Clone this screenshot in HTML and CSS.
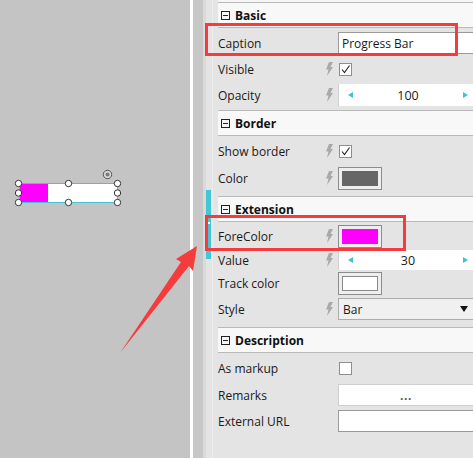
FILE: index.html
```html
<!DOCTYPE html>
<html>
<head>
<meta charset="utf-8">
<link rel="stylesheet" href="styles.css">
</head>
<body>
<div class="app">
  <div class="canvas">
    <svg class="selection" width="140" height="50" viewBox="0 160 140 50">
      <rect x="19.5" y="183.5" width="98" height="19" fill="#ffffff" stroke="#46c3d4" stroke-width="1"/>
      <rect x="20" y="184" width="28" height="18" fill="#ff00ff"/>
      <g fill="#ffffff" stroke="#333" stroke-width="1">
        <circle cx="18.5" cy="183.5" r="3.2"/>
        <circle cx="68.5" cy="183.5" r="3.2"/>
        <circle cx="117.5" cy="183.5" r="3.2"/>
        <circle cx="18.5" cy="193" r="3.2"/>
        <circle cx="117.5" cy="193" r="3.2"/>
        <circle cx="18.5" cy="202.5" r="3.2"/>
        <circle cx="68.5" cy="202.5" r="3.2"/>
        <circle cx="117.5" cy="202.5" r="3.2"/>
      </g>
      <circle cx="107.5" cy="174.5" r="4.2" fill="#d8d8d8" stroke="#555" stroke-width="1"/>
      <circle cx="107.5" cy="174.5" r="2" fill="#7a7a7a"/>
    </svg>
  </div>
  <div class="sep-white"></div>
  <div class="splitter"></div>
  <div class="sep-light"></div>
  <div class="panel">
    <div class="gutter"><div class="scroll-mark"><span class="tick"></span></div></div>
    <div class="grid">
      <div class="top-strip"></div>

      <div class="header"><span class="collapse"></span><span class="htext">Basic</span></div>
      <div class="row h30">
        <span class="label">Caption</span><span class="bolt-cell"></span>
        <span class="value"><span class="textbox">Progress Bar</span></span>
      </div>
      <div class="row h22">
        <span class="label">Visible</span>
        <span class="bolt-cell"><svg class="bolt" width="8" height="14" viewBox="0 0 8 14"><path d="M4 0 L8 0 L5.5 5 L8 5 L2 14 L3.5 7.5 L1 7.5 Z" fill="#a9a9a9"/></svg></span>
        <span class="value"><span class="check checked"><svg width="11" height="11" viewBox="0 0 11 11"><path d="M2 5.5 L4.5 8.5 L9.5 1.5" fill="none" stroke="#222" stroke-width="1.1"/></svg></span></span>
      </div>
      <div class="row h30">
        <span class="label">Opacity</span>
        <span class="bolt-cell"><svg class="bolt" width="8" height="14" viewBox="0 0 8 14"><path d="M4 0 L8 0 L5.5 5 L8 5 L2 14 L3.5 7.5 L1 7.5 Z" fill="#a9a9a9"/></svg></span>
        <span class="value"><span class="spin"><span class="arr-l"></span><span class="num">100</span><span class="arr-r"></span></span></span>
      </div>

      <div class="header"><span class="collapse"></span><span class="htext">Border</span></div>
      <div class="row h30">
        <span class="label">Show border</span>
        <span class="bolt-cell"><svg class="bolt" width="8" height="14" viewBox="0 0 8 14"><path d="M4 0 L8 0 L5.5 5 L8 5 L2 14 L3.5 7.5 L1 7.5 Z" fill="#a9a9a9"/></svg></span>
        <span class="value"><span class="check checked"><svg width="11" height="11" viewBox="0 0 11 11"><path d="M2 5.5 L4.5 8.5 L9.5 1.5" fill="none" stroke="#222" stroke-width="1.1"/></svg></span></span>
      </div>
      <div class="row h24 gap6">
        <span class="label">Color</span>
        <span class="bolt-cell"><svg class="bolt" width="8" height="14" viewBox="0 0 8 14"><path d="M4 0 L8 0 L5.5 5 L8 5 L2 14 L3.5 7.5 L1 7.5 Z" fill="#a9a9a9"/></svg></span>
        <span class="value"><span class="swatch"><span class="swatch-in c-gray"></span></span></span>
      </div>

      <div class="header"><span class="collapse"></span><span class="htext">Extension</span></div>
      <div class="row h28">
        <span class="label">ForeColor</span>
        <span class="bolt-cell"><svg class="bolt" width="8" height="14" viewBox="0 0 8 14"><path d="M4 0 L8 0 L5.5 5 L8 5 L2 14 L3.5 7.5 L1 7.5 Z" fill="#a9a9a9"/></svg></span>
        <span class="value"><span class="swatch"><span class="swatch-in c-magenta"></span></span></span>
      </div>
      <div class="row h20">
        <span class="label">Value</span>
        <span class="bolt-cell"><svg class="bolt" width="8" height="14" viewBox="0 0 8 14"><path d="M4 0 L8 0 L5.5 5 L8 5 L2 14 L3.5 7.5 L1 7.5 Z" fill="#a9a9a9"/></svg></span>
        <span class="value"><span class="spin spin-sm"><span class="arr-l"></span><span class="num">30</span><span class="arr-r"></span></span></span>
      </div>
      <div class="row h26">
        <span class="label">Track color</span><span class="bolt-cell"></span>
        <span class="value"><span class="swatch"><span class="swatch-in c-white"></span></span></span>
      </div>
      <div class="row h26 gap5">
        <span class="label">Style</span>
        <span class="bolt-cell"><svg class="bolt" width="8" height="14" viewBox="0 0 8 14"><path d="M4 0 L8 0 L5.5 5 L8 5 L2 14 L3.5 7.5 L1 7.5 Z" fill="#a9a9a9"/></svg></span>
        <span class="value"><span class="dropdown"><span>Bar</span><span class="caret"></span></span></span>
      </div>

      <div class="header"><span class="collapse"></span><span class="htext">Description</span></div>
      <div class="row h30">
        <span class="label">As markup</span><span class="bolt-cell"></span>
        <span class="value"><span class="check"></span></span>
      </div>
      <div class="row h24">
        <span class="label">Remarks</span><span class="bolt-cell"></span>
        <span class="value"><span class="button">...</span></span>
      </div>
      <div class="row h28">
        <span class="label">External URL</span><span class="bolt-cell"></span>
        <span class="value"><span class="textbox"></span></span>
      </div>
    </div>
  </div>

  <div class="hl hl-caption"></div>
  <div class="hl hl-fore"></div>
  <svg class="arrow" width="473" height="458" viewBox="0 0 473 458">
    <polygon points="197,246 176,259 181,262 120,353 189,266 193,271" fill="#f43c3c"/>
  </svg>
</div>
</body>
</html>
```
FILE: styles.css
```css
html, body {
  margin: 0;
  padding: 0;
}
body {
  width: 473px;
  height: 458px;
  overflow: hidden;
  font-family: "Open Sans", "Noto Sans", sans-serif;
  font-size: 12px;
  color: #1a1a1a;
}
.app {
  position: relative;
  display: flex;
  width: 473px;
  height: 458px;
  overflow: hidden;
}
.canvas {
  position: relative;
  width: 190px;
  flex: none;
  background: #c4c4c4;
}
.selection {
  position: absolute;
  left: 0;
  top: 160px;
}
.sep-white {
  width: 3px;
  flex: none;
  background: #ffffff;
}
.splitter {
  width: 10px;
  flex: none;
  background: #c7c7c7;
}
.sep-light {
  width: 3px;
  flex: none;
  background: #dadada;
}
.panel {
  flex: 1;
  display: flex;
  background: #e4e4e4;
  min-width: 0;
}
.gutter {
  width: 6px;
  flex: none;
  border-right: 1px solid #ececec;
  display: flex;
  flex-direction: column;
}
.scroll-mark {
  margin-top: 190px;
  width: 5px;
  height: 69px;
  background: #45c6d6;
  position: relative;
}
.tick {
  position: absolute;
  left: 2px;
  top: 32px;
  width: 2px;
  height: 2px;
  background: #ffffff;
}
.grid {
  flex: 1;
  display: flex;
  flex-direction: column;
  min-width: 0;
}
.top-strip {
  height: 2px;
  margin-left: 5px;
  background: #f6f6f6;
}
.header {
  margin-left: 5px;
  height: 24px;
  background: #f8f8f8;
  border-top: 1px solid #b9b9b9;
  border-bottom: 1px solid #b9b9b9;
  display: flex;
  align-items: center;
  padding-left: 3px;
}
.collapse {
  position: relative;
  width: 7px;
  height: 7px;
  border: 1px solid #222;
  flex: none;
}
.collapse::after {
  content: "";
  position: absolute;
  left: 1px;
  top: 3px;
  width: 5px;
  height: 1px;
  background: #222;
}
.htext {
  margin-left: 5px;
  font-weight: 700;
  font-size: 12px;
  color: #111;
}
.row {
  display: flex;
  align-items: center;
  padding-left: 5px;
}
.h20 { height: 20px; }
.h22 { height: 22px; }
.h24 { height: 24px; }
.h26 { height: 26px; }
.h28 { height: 28px; }
.h30 { height: 30px; }
.gap5 { margin-bottom: 5px; }
.gap6 { margin-bottom: 6px; }
.label {
  width: 107px;
  flex: none;
  white-space: nowrap;
}
.bolt-cell {
  width: 13px;
  flex: none;
  display: flex;
  align-items: center;
}
.bolt {
  display: block;
}
.value {
  flex: 1;
  display: flex;
  align-items: center;
  min-width: 0;
}
.textbox {
  box-sizing: border-box;
  width: 142px;
  height: 22px;
  background: #ffffff;
  border: 1px solid #9a9a9a;
  padding-left: 3px;
  display: flex;
  align-items: center;
  flex: none;
  font-size: 12px;
}
.check {
  box-sizing: border-box;
  width: 13px;
  height: 13px;
  margin-left: 1px;
  background: #ffffff;
  border: 1px solid #8e8e8e;
  display: flex;
  align-items: center;
  justify-content: center;
}
.check svg {
  display: block;
}
.spin {
  box-sizing: border-box;
  width: 142px;
  height: 22px;
  flex: none;
  background: #ffffff;
  border-left: 1px solid #d0d0d0;
  display: flex;
  align-items: center;
  padding-left: 9px;
  padding-right: 12px;
}
.spin-sm {
  height: 20px;
}
.num {
  flex: 1;
  text-align: center;
  font-size: 12.5px;
}
.arr-l {
  width: 0;
  height: 0;
  border-top: 3.5px solid transparent;
  border-bottom: 3.5px solid transparent;
  border-right: 5px solid #42c0da;
}
.arr-r {
  width: 0;
  height: 0;
  border-top: 3.5px solid transparent;
  border-bottom: 3.5px solid transparent;
  border-left: 5px solid #42c0da;
}
.swatch {
  box-sizing: border-box;
  width: 44px;
  height: 23px;
  border: 1px solid #8c8c8c;
  background: #eeeeee;
  padding: 3px;
  display: flex;
  flex: none;
}
.swatch-in {
  flex: 1;
}
.c-gray { background: #666666; }
.c-magenta { background: #ff00ff; }
.c-white {
  background: #ffffff;
  border: 1px solid #888888;
}
.dropdown {
  box-sizing: border-box;
  width: 136px;
  height: 22px;
  flex: none;
  background: #f0f0f0;
  border: 1px solid #acacac;
  display: flex;
  align-items: center;
  justify-content: space-between;
  padding-left: 4px;
  padding-right: 5px;
}
.caret {
  width: 0;
  height: 0;
  border-left: 4px solid transparent;
  border-right: 4px solid transparent;
  border-top: 6px solid #111;
}
.button {
  box-sizing: border-box;
  width: 142px;
  height: 22px;
  flex: none;
  background: #ffffff;
  border: 1px solid #cfcfcf;
  display: flex;
  align-items: center;
  justify-content: center;
  padding-right: 6px;
  font-weight: 700;
  color: #555;
  letter-spacing: 0.5px;
}
.hl {
  position: absolute;
  box-sizing: border-box;
  border: 3px solid #f43c3c;
}
.hl-caption {
  left: 205px;
  top: 23px;
  width: 253px;
  height: 33px;
}
.hl-fore {
  left: 205px;
  top: 215px;
  width: 201px;
  height: 36px;
}
.arrow {
  position: absolute;
  left: 0;
  top: 0;
  pointer-events: none;
}
```
